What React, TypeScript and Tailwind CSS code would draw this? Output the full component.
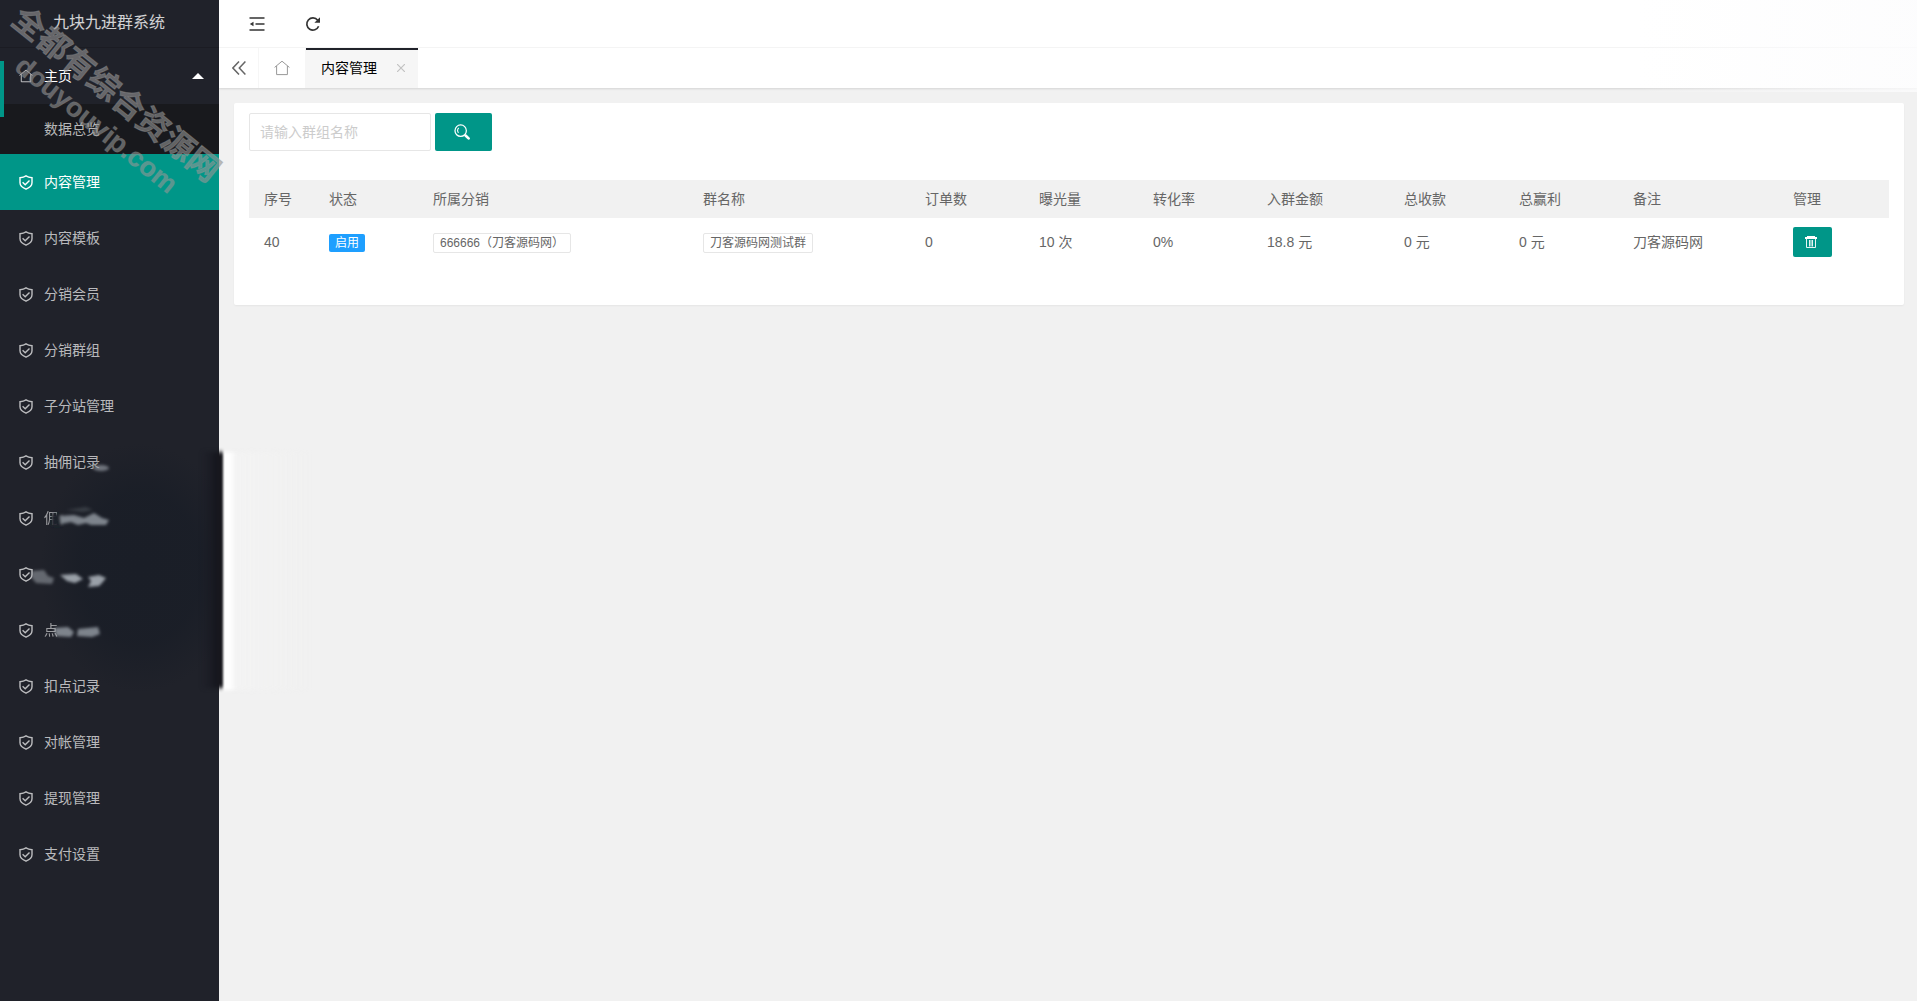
import { useState } from "react";
import type { ReactNode } from "react";

type MenuItem = { name: string; smudged?: boolean };

type Group = {
  id: number;
  status: string;
  agent: string;
  groupName: string;
  orders: string;
  views: string;
  rate: string;
  price: string;
  income: string;
  profit: string;
  remark: string;
};

const menu: MenuItem[] = [
  { name: "内容管理" },
  { name: "内容模板" },
  { name: "分销会员" },
  { name: "分销群组" },
  { name: "子分站管理" },
  { name: "抽佣记录" },
  { name: "佣", smudged: true },
  { name: "", smudged: true },
  { name: "点", smudged: true },
  { name: "扣点记录" },
  { name: "对帐管理" },
  { name: "提现管理" },
  { name: "支付设置" },
];

const columns = [
  { title: "序号", width: "w-[65px]" },
  { title: "状态", width: "w-[104px]" },
  { title: "所属分销", width: "w-[270px]" },
  { title: "群名称", width: "w-[222px]" },
  { title: "订单数", width: "w-[114px]" },
  { title: "曝光量", width: "w-[114px]" },
  { title: "转化率", width: "w-[114px]" },
  { title: "入群金额", width: "w-[137px]" },
  { title: "总收款", width: "w-[115px]" },
  { title: "总赢利", width: "w-[114px]" },
  { title: "备注", width: "w-[160px]" },
  { title: "管理", width: "w-[111px]" },
];

const groups: Group[] = [
  {
    id: 40,
    status: "启用",
    agent: "666666（刀客源码网）",
    groupName: "刀客源码网测试群",
    orders: "0",
    views: "10 次",
    rate: "0%",
    price: "18.8 元",
    income: "0 元",
    profit: "0 元",
    remark: "刀客源码网",
  },
];

function HomeIcon({ className }: { className?: string }) {
  return (
    <svg viewBox="0 0 16 16" fill="none" stroke="currentColor" className={className} aria-hidden="true">
      <path d="M0.6 7.4 8 1.2l7.4 6.2M2.6 6v8.6h10.8V6" />
    </svg>
  );
}

function ShieldIcon() {
  return (
    <svg viewBox="0 0 14 15" fill="none" stroke="currentColor" strokeWidth="1.4" className="h-[15px] w-[14px]" aria-hidden="true">
      <path d="M7 0.9C5.4 2 3.4 2.6 1 2.7v5.1c0 3.2 2.6 5 6 6.4 3.4-1.4 6-3.2 6-6.4V2.7C10.6 2.6 8.6 2 7 0.9z" />
      <path d="M3.6 7.3 6.2 9.7l4.3-4.2" />
    </svg>
  );
}

function ShrinkIcon() {
  return (
    <svg viewBox="0 0 16 14" fill="none" stroke="currentColor" strokeWidth="1.4" className="h-[14px] w-4" aria-hidden="true">
      <path d="M0.5 1h15M6.5 7h9M0.5 13h15" />
      <path d="M4.5 4.8v4.4L0.8 7z" fill="currentColor" stroke="none" />
    </svg>
  );
}

function RefreshIcon() {
  return (
    <svg viewBox="0 0 16 16" fill="none" stroke="currentColor" strokeWidth="1.7" className="h-4 w-4" aria-hidden="true">
      <path d="M13.6 10.2A6.1 6.1 0 1 1 12.7 4.2" />
      <path d="M15 1.2v5.6H9.4z" fill="currentColor" stroke="none" />
    </svg>
  );
}

function SearchIcon() {
  return (
    <svg viewBox="0 0 18 18" fill="none" stroke="currentColor" className="h-4 w-4" aria-hidden="true">
      <circle cx="7.5" cy="7.5" r="6.4" strokeWidth="1.4" />
      <path d="M5.4 4.4C3.9 5.8 3.9 8.4 5 10" strokeWidth="1.2" />
      <path d="m13 13 3.4 3.2" strokeWidth="3" strokeLinecap="round" />
    </svg>
  );
}

function TrashIcon() {
  return (
    <svg viewBox="0 0 12 12" fill="none" stroke="currentColor" className="h-3 w-3" aria-hidden="true">
      <path d="M0 2h12" strokeWidth="2" />
      <path d="M2 0.5h8" />
      <path d="M1.5 3v8.5h9V3M4.5 4v6.500M6 4v6.500M7.500 4v6.500" strokeWidth="0.9" />
    </svg>
  );
}

// soft dark patch that hides three of the menu entries
function Smudge() {
  return (
    <svg
      viewBox="0 0 320 280"
      className="pointer-events-none absolute left-0 top-[430px] h-[280px] w-[320px]"
      aria-hidden="true"
    >
      <defs>
        <filter id="soft" x="-20%" y="-60%" width="140%" height="220%">
          <feGaussianBlur stdDeviation="1.6" />
        </filter>
        <filter id="tips" x="-10%" y="-10%" width="120%" height="120%" colorInterpolationFilters="sRGB">
          <feGaussianBlur stdDeviation="0.8 2" />
        </filter>
        <radialGradient id="patch">
          <stop offset="0" stopColor="#1a1e27" />
          <stop offset="0.6" stopColor="#1a1e27" stopOpacity="0.9" />
          <stop offset="1" stopColor="#1a1e27" stopOpacity="0" />
        </radialGradient>
        <linearGradient id="edge">
          <stop offset="0" stopColor="#1b1d27" stopOpacity="0" />
          <stop offset="0.7" stopColor="#16171e" />
          <stop offset="1" stopColor="#19181d" />
        </linearGradient>
        <linearGradient id="glow">
          <stop offset="0" stopColor="#fff" />
          <stop offset="0.08" stopColor="#fff" />
          <stop offset="0.16" stopColor="#f3f3f3" />
          <stop offset="1" stopColor="#f2f2f1" stopOpacity="0" />
        </linearGradient>
      </defs>
      <ellipse cx="140" cy="138" rx="100" ry="125" fill="url(#patch)" />
      <rect x="222" y="22" width="90" height="238" fill="url(#glow)" filter="url(#tips)" />
      <rect x="200" y="22" width="23" height="236" fill="url(#edge)" filter="url(#tips)" />
      <g filter="url(#soft)" fill="#a7aeb6">
        <ellipse cx="101" cy="38" rx="8" ry="3" opacity="0.6" />
        <rect x="52" y="84" width="10" height="12" fill="#1f222a" />
        <path d="M60 86l14-1 10 3 10-5 8 5 7 2-3 5H91l-5-2-8 2-7-3-10 2z" opacity="0.7" />
        <path d="M66 80l20-3 7 3-10 2z" opacity="0.2" />
        <path d="M32 141l12-1 4 6 6 2-2 6-16-1-5-6z" opacity="0.5" />
        <path d="M60 145l16-1 7 5-8 4-8-2z" opacity="0.9" />
        <path d="M88 147l11-2 7 3-4 5-3 3-11 1 3-6z" opacity="0.9" />
        <path d="M54 198l14-1 6 5-3 5-15-1z" opacity="0.7" />
        <path d="M78 199l20-2 2 7-8 3-15-1z" opacity="0.7" />
      </g>
    </svg>
  );
}

// pale haze over the right end of the top bars
function Haze() {
  return (
    <div
      className="pointer-events-none absolute right-0 top-0 h-[92px] w-[280px] bg-linear-to-r from-white/0 to-[#fcfcfd]/80"
      aria-hidden="true"
    />
  );
}

function Watermark() {
  return (
    <div
      className="pointer-events-none absolute left-7 top-0 origin-top-left rotate-[39deg] whitespace-nowrap font-bold text-[#969696]/60"
      aria-hidden="true"
    >
      <div className="text-[32px] leading-9 [-webkit-text-stroke:1px_#96969666]">全都有综合资源网</div>
      <div className="pl-8 text-[27px] leading-9 [-webkit-text-stroke:1px_#96969633]">douyouvip.com</div>
    </div>
  );
}

function Outlined({ children }: { children: ReactNode }) {
  return (
    <span className="inline-block h-5 rounded-xs border border-[#e6e6e6] px-1.5 align-middle text-xs leading-[18px]">
      {children}
    </span>
  );
}

export default function App() {
  const [active, setActive] = useState("内容管理");
  const [open, setOpen] = useState(true);
  const [keyword, setKeyword] = useState("");

  return (
    <div className="relative flex min-h-screen bg-[#f1f1f1] font-['Liberation_Sans','Noto_Sans_CJK_SC',sans-serif] text-sm text-[#666]">
      <aside className="w-[219px] shrink-0 bg-[#20222a] text-white/70">
        <h1 className="h-12 border-b border-black/15 pr-px text-center text-base leading-[46px] text-white/80">
          九块九进群系统
        </h1>
        <nav>
          <button
            type="button"
            onClick={() => setOpen(!open)}
            className="relative flex h-14 w-full items-center pl-[19px] pr-[15px] text-white"
          >
            <span className="absolute left-0 top-[13px] h-14 w-1 bg-[#009688]" />
            <HomeIcon className="h-[14px] w-[14px] text-white/80" />
            <span className="ml-[11px] grow text-left">主页</span>
            <svg viewBox="0 0 12 6" className="h-1.5 w-3" fill="currentColor" aria-hidden="true">
              <path d="M6 0l6 6H0z" />
            </svg>
          </button>
          {open && (
            <div className="bg-[#18191d] py-[5px]">
              <a href="#overview" className="block pl-11 leading-10">
                数据总览
              </a>
            </div>
          )}
          <ul>
            {menu.map((item, index) => (
              <li key={index}>
                <a
                  href={`#menu-${index}`}
                  onClick={() => !item.smudged && setActive(item.name)}
                  className={
                    item.name === active
                      ? "flex h-14 items-center gap-[11px] bg-[#009688] pl-[19px] text-white"
                      : "flex h-14 items-center gap-[11px] pl-[19px]"
                  }
                >
                  <ShieldIcon />
                  <span className={item.smudged ? "opacity-80" : ""}>{item.name}</span>
                </a>
              </li>
            ))}
          </ul>
        </nav>
      </aside>

      <div className="min-w-0 grow">
        <header className="flex h-12 items-center border-b border-[#f6f6f6] bg-white pl-[30px] text-[#333]">
          <button type="button" aria-label="侧边伸缩" className="w-4">
            <ShrinkIcon />
          </button>
          <button type="button" aria-label="刷新" className="ml-10">
            <RefreshIcon />
          </button>
        </header>

        <div className="flex h-10 bg-white shadow-[0_1px_2px_rgba(0,0,0,0.12)]">
          <button
            type="button"
            aria-label="向左"
            className="flex w-10 items-center justify-center border-r border-[#f6f6f6] text-[#666]"
          >
            <svg viewBox="0 0 14 14" fill="none" stroke="currentColor" strokeWidth="1.5" className="h-[14px] w-[14px]" aria-hidden="true">
              <path d="M7 0.5.9 7 7 13.5M13.4 0.5 7.3 7l6.1 6.5" />
            </svg>
          </button>
          <button type="button" aria-label="主页" className="flex w-[47px] items-center justify-center border-r border-[#f6f6f6] text-[#999]">
            <HomeIcon className="h-4 w-4" />
          </button>
          <div className="flex w-28 items-center justify-between border-t-2 border-[#20222a] bg-[#f6f6f6] pb-0.5 pl-[15px] pr-[13px] text-black">
            <span>{active}</span>
            <button type="button" aria-label="关闭" className="text-[#c2c2c2]">
              <svg viewBox="0 0 8 8" fill="none" stroke="currentColor" strokeWidth="1.2" className="h-2 w-2" aria-hidden="true">
                <path d="M0 0l8 8M8 0L0 8" />
              </svg>
            </button>
          </div>
        </div>

        <main className="pb-4 pl-[15px] pr-[13px] pt-[15px]">
          <section className="rounded-xs bg-white px-[15px] pb-[39px] pt-[10px] shadow-[0_1px_2px_rgba(0,0,0,0.05)]">
            <form className="flex gap-1" onSubmit={(e) => e.preventDefault()}>
              <input
                type="text"
                aria-label="群组名称"
                placeholder="请输入群组名称"
                value={keyword}
                onChange={(e) => setKeyword(e.target.value)}
                className="h-[38px] w-[182px] rounded-xs border border-[#e6e6e6] pl-[10px] placeholder:text-[#ccc]"
              />
              <button
                type="submit"
                aria-label="搜索"
                className="flex h-[38px] w-[57px] items-center rounded-xs bg-[#009688] pl-[19px] text-white"
              >
                <SearchIcon />
              </button>
            </form>

            <table className="mt-[29px] w-full table-fixed text-left">
              <thead className="bg-[#f1f1f1]">
                <tr>
                  {columns.map((column) => (
                    <th key={column.title} className={`${column.width} h-[38px] px-[15px] font-normal`}>
                      {column.title}
                    </th>
                  ))}
                </tr>
              </thead>
              <tbody>
                {groups
                  .filter((group) => group.groupName.includes(keyword))
                  .map((group) => (
                    <tr key={group.id} className="h-12 whitespace-nowrap [&>td]:pl-[15px]">
                      <td>{group.id}</td>
                      <td>
                        <span className="inline-block h-[18px] rounded-xs bg-[#1e9fff] px-1.5 align-middle text-xs leading-[18px] text-white">
                          {group.status}
                        </span>
                      </td>
                      <td>
                        <Outlined>{group.agent}</Outlined>
                      </td>
                      <td>
                        <Outlined>{group.groupName}</Outlined>
                      </td>
                      <td>{group.orders}</td>
                      <td>{group.views}</td>
                      <td>{group.rate}</td>
                      <td>{group.price}</td>
                      <td>{group.income}</td>
                      <td>{group.profit}</td>
                      <td>{group.remark}</td>
                      <td>
                        <button
                          type="button"
                          aria-label="删除"
                          className="flex h-[30px] w-[39px] items-center rounded-xs bg-[#009688] pl-3 text-white"
                        >
                          <TrashIcon />
                        </button>
                      </td>
                    </tr>
                  ))}
              </tbody>
            </table>
          </section>
        </main>
      </div>

      <Smudge />
      <Haze />
      <Watermark />
    </div>
  );
}
